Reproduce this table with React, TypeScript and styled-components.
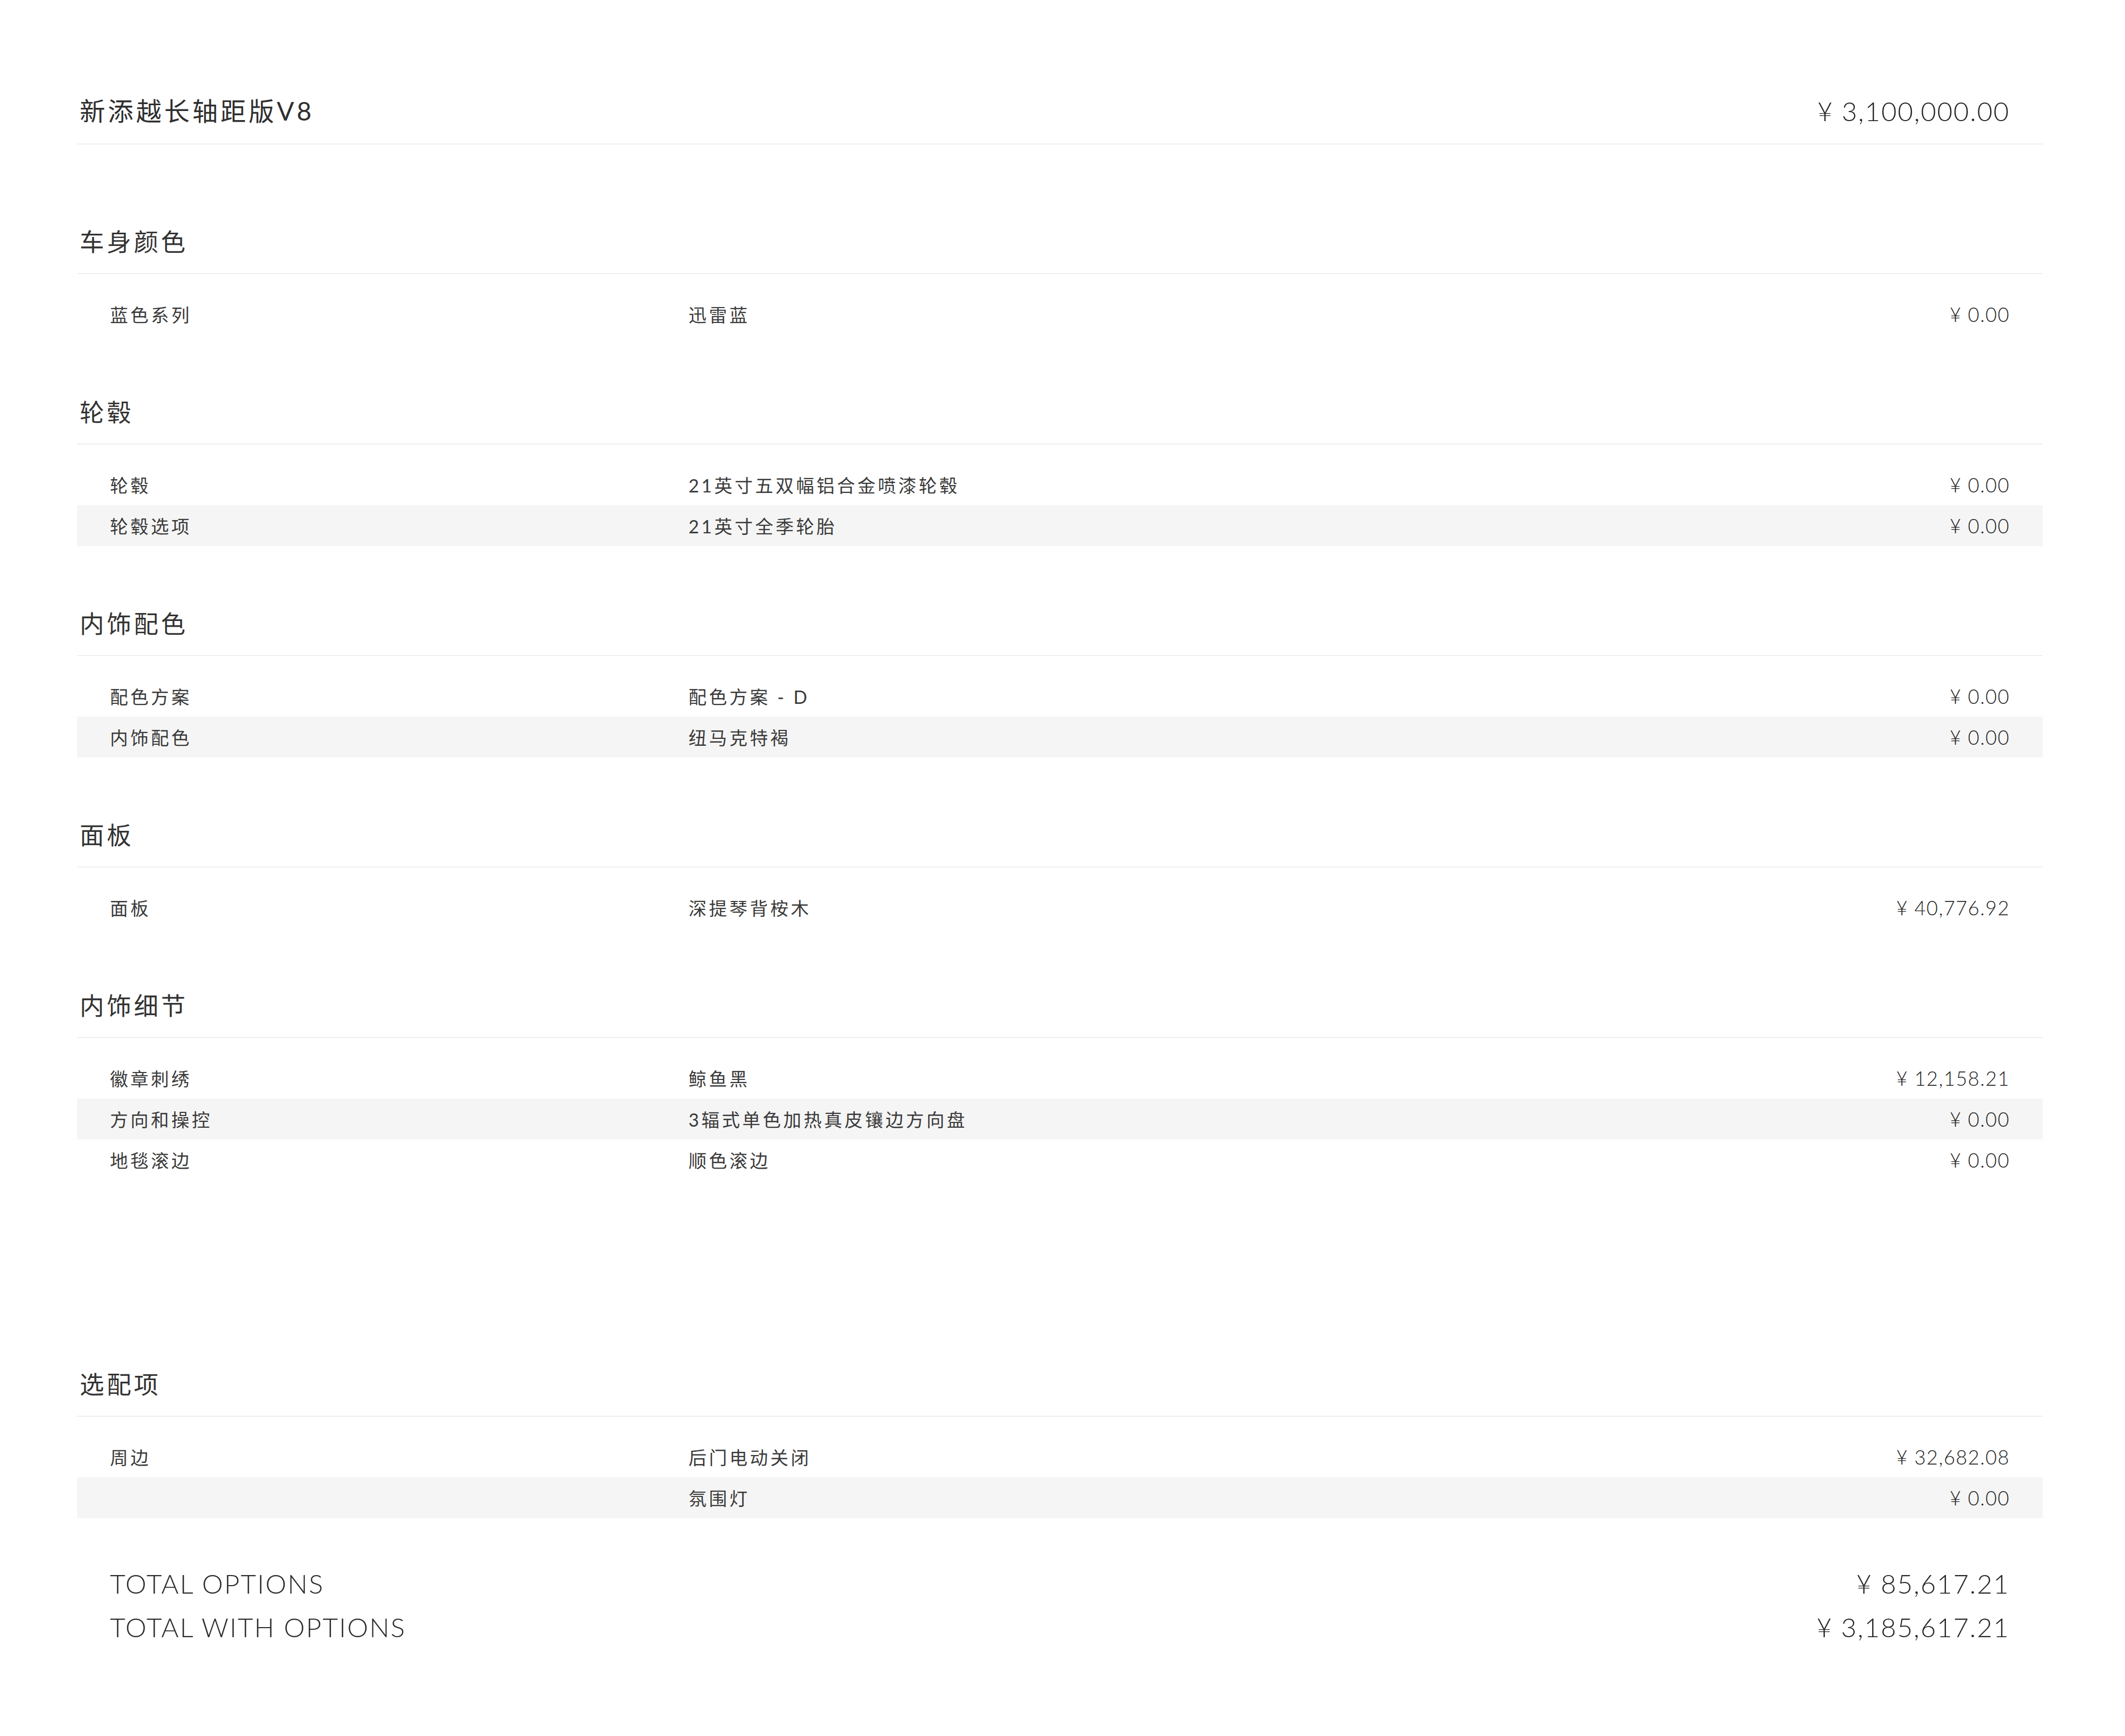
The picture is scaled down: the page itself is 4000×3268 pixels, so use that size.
import styled, { createGlobalStyle } from 'styled-components';

const GlobalStyle = createGlobalStyle`
  html, body {
    margin: 0;
    padding: 0;
    background: #ffffff;
  }
  body {
    font-family: Lato, "Noto Sans CJK SC", sans-serif;
    color: #363636;
  }
`;

const Page = styled.div`
  width: 3700px;
  padding: 177px 155px 160px 145px;
`;

const ModelRow = styled.div`
  display: flex;
  align-items: center;
  justify-content: space-between;
  height: 64px;
  padding: 0 62px 29px 5px;
  border-bottom: 2px solid #efefef;
  margin-bottom: 153px;
`;

const ModelName = styled.div`
  font-size: 48px;
  letter-spacing: 5px;
  line-height: 64px;
  color: #2f2f2f;
`;

const BigPrice = styled.div`
  font-size: 50px;
  font-weight: 300;
  letter-spacing: 1.8px;
  line-height: 64px;
  color: #262626;
`;

const Section = styled.section<{ $gap?: number }>`
  margin-bottom: ${({ $gap }) => $gap ?? 116}px;
`;

const SectionTitle = styled.h2`
  margin: 0 0 37px;
  padding: 0 0 29px 5px;
  height: 60px;
  line-height: 60px;
  font-size: 46px;
  font-weight: 400;
  letter-spacing: 5px;
  color: #333;
  border-bottom: 2px solid #efefef;
`;

const Row = styled.div`
  display: grid;
  grid-template-columns: 1089px 1fr auto;
  align-items: center;
  height: 77px;
  padding: 0 62px;
  &:nth-child(even) {
    background: #f5f5f5;
  }
`;

const Cell = styled.span`
  font-size: 34px;
  letter-spacing: 4.5px;
  color: #3a3a3a;
  white-space: nowrap;
`;

const Price = styled.span`
  font-size: 37px;
  font-weight: 300;
  letter-spacing: 1.4px;
  color: #262626;
  text-align: right;
`;

const Totals = styled.div`
  padding: 0 62px;
`;

const TotalRow = styled.div`
  display: flex;
  justify-content: space-between;
  align-items: center;
  height: 82px;
`;

const TotalLabel = styled.span`
  font-size: 50px;
  font-weight: 300;
  letter-spacing: 2.2px;
  color: #2c2c2c;
`;

const TotalPrice = styled.span`
  font-size: 50px;
  font-weight: 300;
  letter-spacing: 1.9px;
  color: #262626;
`;

type Item = { label: string; value: string; price: string };
type Group = { title: string; items: Item[]; gap?: number };

const groups: Group[] = [
  { title: '车身颜色', items: [{ label: '蓝色系列', value: '迅雷蓝', price: '¥ 0.00' }] },
  {
    title: '轮毂',
    items: [
      { label: '轮毂', value: '21英寸五双幅铝合金喷漆轮毂', price: '¥ 0.00' },
      { label: '轮毂选项', value: '21英寸全季轮胎', price: '¥ 0.00' },
    ],
  },
  {
    title: '内饰配色',
    items: [
      { label: '配色方案', value: '配色方案 - D', price: '¥ 0.00' },
      { label: '内饰配色', value: '纽马克特褐', price: '¥ 0.00' },
    ],
  },
  { title: '面板', items: [{ label: '面板', value: '深提琴背桉木', price: '¥ 40,776.92' }] },
  {
    title: '内饰细节',
    gap: 354,
    items: [
      { label: '徽章刺绣', value: '鲸鱼黑', price: '¥ 12,158.21' },
      { label: '方向和操控', value: '3辐式单色加热真皮镶边方向盘', price: '¥ 0.00' },
      { label: '地毯滚边', value: '顺色滚边', price: '¥ 0.00' },
    ],
  },
  {
    title: '选配项',
    gap: 82,
    items: [
      { label: '周边', value: '后门电动关闭', price: '¥ 32,682.08' },
      { label: '', value: '氛围灯', price: '¥ 0.00' },
    ],
  },
];

export default function App() {
  return (
    <>
      <GlobalStyle />
      <Page>
        <ModelRow>
          <ModelName>新添越长轴距版V8</ModelName>
          <BigPrice>¥ 3,100,000.00</BigPrice>
        </ModelRow>
        {groups.map((g) => (
          <Section key={g.title} $gap={g.gap}>
            <SectionTitle>{g.title}</SectionTitle>
            <div>
              {g.items.map((it, i) => (
                <Row key={i}>
                  <Cell>{it.label}</Cell>
                  <Cell>{it.value}</Cell>
                  <Price>{it.price}</Price>
                </Row>
              ))}
            </div>
          </Section>
        ))}
        <Totals>
          <TotalRow>
            <TotalLabel>TOTAL OPTIONS</TotalLabel>
            <TotalPrice>¥ 85,617.21</TotalPrice>
          </TotalRow>
          <TotalRow>
            <TotalLabel>TOTAL WITH OPTIONS</TotalLabel>
            <TotalPrice>¥ 3,185,617.21</TotalPrice>
          </TotalRow>
        </Totals>
      </Page>
    </>
  );
}
